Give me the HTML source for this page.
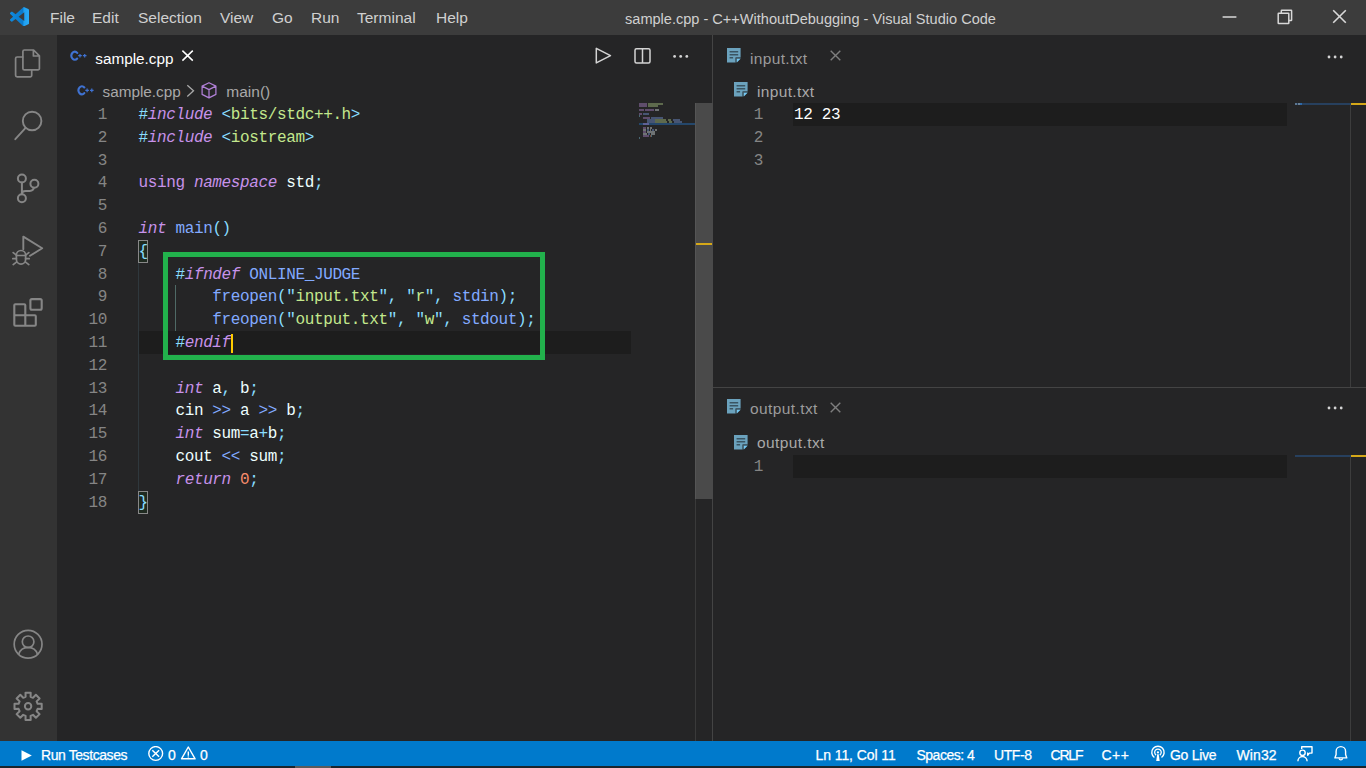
<!DOCTYPE html>
<html>
<head>
<meta charset="utf-8">
<title>sample.cpp - C++WithoutDebugging - Visual Studio Code</title>
<style>
*{box-sizing:border-box;margin:0;padding:0}
html,body{width:1366px;height:768px;overflow:hidden;background:#252526;font-family:"Liberation Sans",sans-serif;color:#ccc}
.abs{position:absolute}
#titlebar{position:absolute;left:0;top:0;width:1366px;height:35px;background:#3c3c3c}
.menu{position:absolute;top:0;height:35px;line-height:35px;font-size:15.5px;color:#d0d0d0;white-space:nowrap}
#title{position:absolute;top:0;height:35px;line-height:38px;left:605.5px;width:410px;text-align:center;font-size:14.55px;color:#d0d0d0;white-space:nowrap}
#activity{position:absolute;left:0;top:35px;width:57px;height:706px;background:#333333}
#editor1{position:absolute;left:57px;top:35px;width:655px;height:706px;background:#252526}
#vsplit{position:absolute;left:712px;top:35px;width:1px;height:706px;background:#444444}
#editor2{position:absolute;left:713px;top:35px;width:653px;height:352px;background:#252526}
#hsplit{position:absolute;left:713px;top:387px;width:653px;height:1px;background:#444444}
#editor3{position:absolute;left:713px;top:388px;width:653px;height:353px;background:#252526}
#status{position:absolute;left:0;top:741px;width:1366px;height:25px;background:#007acc}
#bottom{position:absolute;left:0;top:766px;width:1366px;height:2px;background:#1b252c}
.st{position:absolute;top:741px;height:25px;line-height:29px;-webkit-text-stroke:0.25px #fff;font-size:14.6px;color:#fff;white-space:nowrap}
.code{position:absolute;font-family:"Liberation Mono",monospace;font-size:16px;letter-spacing:-0.37px;white-space:pre;height:23px;line-height:23px;color:#eeffff}
.ln{position:absolute;font-family:"Liberation Mono",monospace;font-size:16px;letter-spacing:-0.37px;white-space:pre;height:23px;line-height:23px;color:#858585;text-align:right;width:40px}
.k{color:#c792ea}
.ki{color:#c792ea;font-style:italic}
.p{color:#89ddff}
.s{color:#c3e88d}
.f{color:#82aaff}
.n{color:#f78c6c}
.tab{position:absolute;font-size:16.2px;white-space:nowrap;height:24px;line-height:24px}
.bc{position:absolute;font-size:15.6px;white-space:nowrap;height:24px;line-height:24px;color:#a9a9a9}
</style>
</head>
<body>
<div id="titlebar"></div>
<div id="activity"></div>
<div id="editor1"></div>
<div id="vsplit"></div>
<div id="editor2"></div>
<div id="hsplit"></div>
<div id="editor3"></div>
<div id="status"></div>
<div id="bottom"></div>

<!-- MENU -->
<div class="menu" style="left:50px">File</div>
<div class="menu" style="left:92px">Edit</div>
<div class="menu" style="left:138px">Selection</div>
<div class="menu" style="left:220px">View</div>
<div class="menu" style="left:272px">Go</div>
<div class="menu" style="left:311px">Run</div>
<div class="menu" style="left:357px">Terminal</div>
<div class="menu" style="left:436px">Help</div>
<div id="title">sample.cpp - C++WithoutDebugging - Visual Studio Code</div>


<!-- VS CODE LOGO -->
<svg class="abs" style="left:10px;top:7px" width="19" height="19.300" viewBox="0 0 24 24" preserveAspectRatio="none"><defs><linearGradient id="lg" x1="0" x2="1" y1="0" y2="0"><stop offset="0" stop-color="#0f8ade"/><stop offset="0.68" stop-color="#0a7acc"/><stop offset="0.73" stop-color="#1f9ff0"/><stop offset="1" stop-color="#29acf6"/></linearGradient></defs><path fill="url(#lg)" d="M23.15 2.587L18.21.21a1.494 1.494 0 0 0-1.705.29l-9.46 8.63-4.12-3.128a.999.999 0 0 0-1.276.057L.327 7.261A1 1 0 0 0 .326 8.74L3.899 12 .326 15.26a1 1 0 0 0 .001 1.479L1.65 17.94a.999.999 0 0 0 1.276.057l4.12-3.128 9.46 8.63a1.492 1.492 0 0 0 1.704.29l4.942-2.377A1.5 1.5 0 0 0 24 20.06V3.939a1.5 1.5 0 0 0-.85-1.352zm-5.146 14.861L10.826 12l7.178-5.448v10.896z"/></svg>

<!-- WINDOW CONTROLS -->
<svg class="abs" style="left:1215px;top:0" width="151" height="35" viewBox="0 0 151 35" fill="none" stroke="#d8d8d8" stroke-width="1.5">
<path d="M7.6 17h13.8"/>
<rect x="63.200" y="13.200" width="10.600" height="10.300" rx="0.500"/><path d="M66.300 13.200v-2.500a0.500 0.500 0 0 1 0.500-0.500h9.300a0.500 0.500 0 0 1 0.500 0.500v9.300a0.500 0.500 0 0 1-0.500 0.500H73.800"/>
<path d="M118.200 10.200l12.600 12.600M130.800 10.200l-12.600 12.600" stroke-width="1.600"/>
</svg>

<!-- ACTIVITY BAR ICONS -->
<svg class="abs" style="left:0;top:35px" width="57" height="310" viewBox="0 35 57 310" fill="none" stroke="#868686" stroke-width="1.7" stroke-linejoin="round" stroke-linecap="round">
<!-- files -->
<path d="M22.900 56.500V51.500a1.500 1.500 0 0 1 1.500-1.500h9.200l5.800 5.800v12.600a1.500 1.500 0 0 1-1.500 1.500H24.400a1.500 1.500 0 0 1-1.500-1.500V56.500zM33.400 50.200v5.800h5.800"/>
<path d="M22.700 57H17.100a1.500 1.500 0 0 0-1.500 1.500v16.800a1.500 1.500 0 0 0 1.500 1.500h13.100a1.500 1.500 0 0 0 1.500-1.500V70.200"/>
<!-- search -->
<circle cx="32.100" cy="121" r="9.300" stroke-width="1.900"/><path d="M25.600 127.900L15.300 139.200" stroke-width="1.900"/>
<!-- scm -->
<g stroke-width="2"><circle cx="21.900" cy="178.500" r="4"/><circle cx="34.400" cy="183.700" r="4"/><circle cx="21.900" cy="198.300" r="4"/>
<path d="M21.900 182.500V194.300M33.900 187.700c-.400 2.300-1.600 3.200-4 3.200h-4.300c-2.200 0-3.700 1.200-3.700 3.300"/></g>
<!-- debug -->
<path d="M23.300 249.200V236.600L42.200 248.300 30 255.800" stroke-width="1.900"/>
<rect x="16.400" y="250.500" width="9.200" height="13.600" rx="4.600"/><path d="M16.400 255.500h9.200M13.200 252.600l3.200 2.500M28.800 252.600l-3.200 2.500M12.800 258.700h3.600M25.600 258.700h3.600M13.200 264.600l3.200-2.500M28.800 264.600l-3.200-2.500"/>
<!-- extensions -->
<path d="M15.300 304.300h9a1 1 0 0 1 1 1v9.900h9.500a1 1 0 0 1 1 1v8.600a1 1 0 0 1-1 1h-19.500a1 1 0 0 1-1-1v-19.500a1 1 0 0 1 1-1zM14.300 315.200h11M25.300 315.200v10.600" stroke-width="2.100"/>
<rect x="30.400" y="299.100" width="11.300" height="10.700" rx="1.500" stroke-width="2.100"/>
</svg>
<svg class="abs" style="left:0;top:625px" width="57" height="100" viewBox="0 625 57 100" fill="none" stroke="#868686" stroke-width="1.7" stroke-linejoin="round">
<circle cx="28.100" cy="644.300" r="13.900"/><circle cx="28.100" cy="641.800" r="5.800"/><path d="M18.600 654.400c1.500-4.600 5-7 9.500-7s8 2.400 9.500 7"/>
<circle cx="28.100" cy="706.300" r="3.200" stroke-width="2"/>
<path stroke-width="2" d="M25.6 696.8L25.5 692.7L30.7 692.7L30.6 696.8L33.0 697.8L35.9 694.8L39.6 698.5L36.6 701.4L37.6 703.8L41.7 703.7L41.7 708.9L37.6 708.8L36.6 711.2L39.6 714.1L35.9 717.8L33.0 714.8L30.6 715.8L30.7 719.9L25.5 719.9L25.6 715.8L23.2 714.8L20.3 717.8L16.6 714.1L19.6 711.2L18.6 708.8L14.5 708.9L14.5 703.7L18.6 703.8L19.6 701.4L16.6 698.5L20.3 694.8L23.2 697.8z"/>
</svg>

<!-- TAB 1 -->
<svg class="abs" style="left:69px;top:49px" width="20" height="14" viewBox="69 49 20 14" fill="none" stroke="#3f72d2"><path d="M77.200 52.900a3.300 4.100 0 1 0 0 5.600" stroke-width="2.100" stroke-linecap="round"/><path d="M80 53.900v3.600M78.200 55.700h3.600M84.700 53.900v3.600M82.900 55.700h3.600" stroke-width="1.200"/></svg>
<div class="tab" style="left:95.300px;top:46.500px;color:#fff;font-size:15.300px">sample.cpp</div>
<svg class="abs" style="left:181px;top:49px" width="14" height="14" viewBox="181 49 14 14" fill="none" stroke="#fff" stroke-width="1.500"><path d="M182.400 50.600l10.400 10M192.800 50.600l-10.400 10"/></svg>
<!-- editor actions -->
<svg class="abs" style="left:590px;top:44px" width="104" height="24" viewBox="590 44 104 24" fill="none" stroke="#d4d4d4" stroke-width="1.500" stroke-linejoin="round"><path d="M596.300 48.300v14.600l14.200-7.300z"/><rect x="635" y="48.700" width="15" height="14.200" rx="1.500"/><path d="M642.500 48.700v14.200"/><g fill="#d4d4d4" stroke="none"><circle cx="674.600" cy="56.400" r="1.400"/><circle cx="680.700" cy="56.400" r="1.400"/><circle cx="686.800" cy="56.400" r="1.400"/></g></svg>

<!-- BREADCRUMB 1 -->
<svg class="abs" style="left:76px;top:83px" width="20" height="14" viewBox="76 83 20 14" fill="none" stroke="#3f72d2"><path d="M84.300 87.500a3.300 4.100 0 1 0 0 5.600" stroke-width="2.100" stroke-linecap="round"/><path d="M87.100 88.600v3.600M85.300 90.400h3.600M91.800 88.600v3.600M90 90.400h3.600" stroke-width="1.200"/></svg>
<div class="bc" style="left:102.500px;top:79.500px;font-size:15.300px">sample.cpp</div>
<svg class="abs" style="left:185px;top:84px" width="11" height="14" viewBox="185 84 11 14" fill="none" stroke="#a9a9a9" stroke-width="1.300"><path d="M187.300 85.200l6.200 5.600-6.200 5.600"/></svg>
<svg class="abs" style="left:200px;top:81px" width="18" height="19" viewBox="200 81 18 19" fill="none" stroke="#b180d7" stroke-width="1.250" stroke-linejoin="round"><path d="M209 82.700l6.900 3.400v8.300l-6.900 3.500-6.900-3.500v-8.300zM202.100 86.100l6.900 3.500 6.900-3.500M209 89.600v8.300"/></svg>
<div class="bc" style="left:226.300px;top:79.500px;font-size:15.500px">main()</div>
<!-- ENDCHROME -->

<!-- CODE -->
<div class="abs" style="left:139px;top:331px;width:492px;height:23px;background:#1d1d1d"></div>
<div class="abs" style="left:138px;top:263px;width:1px;height:228px;background:#2f383d"></div>
<div class="abs" style="left:175px;top:285px;width:1px;height:46px;background:#4f6a66"></div>
<div class="abs" style="left:138px;top:240px;width:10px;height:23px;border:1px solid #888;background:#1f2a20"></div>
<div class="abs" style="left:138px;top:491px;width:10px;height:23px;border:1px solid #888;background:#1f2a20"></div>
<div class="ln" style="left:67px;top:104px">1</div>
<div class="code" style="left:138.500px;top:104px"><span class="p">#</span><span class="ki">include</span> <span class="p">&lt;</span><span class="s">bits/stdc++.h</span><span class="p">&gt;</span></div>
<div class="ln" style="left:67px;top:127px">2</div>
<div class="code" style="left:138.500px;top:127px"><span class="p">#</span><span class="ki">include</span> <span class="p">&lt;</span><span class="s">iostream</span><span class="p">&gt;</span></div>
<div class="ln" style="left:67px;top:150px">3</div>
<div class="ln" style="left:67px;top:172px">4</div>
<div class="code" style="left:138.500px;top:172px"><span class="k">using</span> <span class="ki">namespace</span> std<span class="p">;</span></div>
<div class="ln" style="left:67px;top:195px">5</div>
<div class="ln" style="left:67px;top:218px">6</div>
<div class="code" style="left:138.500px;top:218px"><span class="ki">int</span> <span class="f">main</span><span class="p">()</span></div>
<div class="ln" style="left:67px;top:241px">7</div>
<div class="code" style="left:138.500px;top:241px"><span class="p">{</span></div>
<div class="ln" style="left:67px;top:264px">8</div>
<div class="code" style="left:138.500px;top:264px">    <span class="p">#</span><span class="ki">ifndef</span> <span class="f">ONLINE_JUDGE</span></div>
<div class="ln" style="left:67px;top:286px">9</div>
<div class="code" style="left:138.500px;top:286px">        <span class="f">freopen</span><span class="p">("</span><span class="s">input.txt</span><span class="p">",</span> <span class="p">"</span><span class="s">r</span><span class="p">",</span> <span class="f">stdin</span><span class="p">);</span></div>
<div class="ln" style="left:67px;top:309px">10</div>
<div class="code" style="left:138.500px;top:309px">        <span class="f">freopen</span><span class="p">("</span><span class="s">output.txt</span><span class="p">",</span> <span class="p">"</span><span class="s">w</span><span class="p">",</span> <span class="f">stdout</span><span class="p">);</span></div>
<div class="ln" style="left:67px;top:332px">11</div>
<div class="code" style="left:138.500px;top:332px">    <span class="p">#</span><span class="ki">endif</span></div>
<div class="ln" style="left:67px;top:355px">12</div>
<div class="ln" style="left:67px;top:378px">13</div>
<div class="code" style="left:138.500px;top:378px">    <span class="ki">int</span> a<span class="p">,</span> b<span class="p">;</span></div>
<div class="ln" style="left:67px;top:400px">14</div>
<div class="code" style="left:138.500px;top:400px">    cin <span class="f">&gt;&gt;</span> a <span class="f">&gt;&gt;</span> b<span class="p">;</span></div>
<div class="ln" style="left:67px;top:423px">15</div>
<div class="code" style="left:138.500px;top:423px">    <span class="ki">int</span> sum<span class="p">=</span>a<span class="p">+</span>b<span class="p">;</span></div>
<div class="ln" style="left:67px;top:446px">16</div>
<div class="code" style="left:138.500px;top:446px">    cout <span class="f">&lt;&lt;</span> sum<span class="p">;</span></div>
<div class="ln" style="left:67px;top:469px">17</div>
<div class="code" style="left:138.500px;top:469px">    <span class="ki">return</span> <span class="n">0</span><span class="p">;</span></div>
<div class="ln" style="left:67px;top:492px">18</div>
<div class="code" style="left:138.500px;top:492px"><span class="p">}</span></div>
<div class="abs" style="left:231px;top:334px;width:2px;height:19px;background:#ffcc00"></div>
<div class="abs" style="left:163px;top:252px;width:382px;height:108px;border:5px solid #22b14c"></div>
<div class="abs" style="left:639px;top:123px;width:56px;height:2px;background:#24476b"></div>
<div class="abs" style="left:639px;top:103px;width:8px;height:2px;background:#b78ad6;opacity:.4"></div>
<div class="abs" style="left:648px;top:103px;width:15px;height:2px;background:#b5d38a;opacity:.4"></div>
<div class="abs" style="left:639px;top:105px;width:8px;height:2px;background:#b78ad6;opacity:.4"></div>
<div class="abs" style="left:648px;top:105px;width:10px;height:2px;background:#b5d38a;opacity:.4"></div>
<div class="abs" style="left:639px;top:109px;width:5px;height:2px;background:#b78ad6;opacity:.4"></div>
<div class="abs" style="left:645px;top:109px;width:9px;height:2px;background:#b78ad6;opacity:.4"></div>
<div class="abs" style="left:655px;top:109px;width:4px;height:2px;background:#dfe8ea;opacity:.4"></div>
<div class="abs" style="left:639px;top:113px;width:3px;height:2px;background:#b78ad6;opacity:.4"></div>
<div class="abs" style="left:643px;top:113px;width:6px;height:2px;background:#7a9de8;opacity:.4"></div>
<div class="abs" style="left:639px;top:115px;width:1px;height:2px;background:#7fcbe8;opacity:.4"></div>
<div class="abs" style="left:643px;top:117px;width:7px;height:2px;background:#b78ad6;opacity:.4"></div>
<div class="abs" style="left:651px;top:117px;width:12px;height:2px;background:#7a9de8;opacity:.4"></div>
<div class="abs" style="left:647px;top:119px;width:8px;height:2px;background:#7a9de8;opacity:.4"></div>
<div class="abs" style="left:655px;top:119px;width:11px;height:2px;background:#b5d38a;opacity:.4"></div>
<div class="abs" style="left:668px;top:119px;width:3px;height:2px;background:#b5d38a;opacity:.4"></div>
<div class="abs" style="left:673px;top:119px;width:7px;height:2px;background:#7a9de8;opacity:.4"></div>
<div class="abs" style="left:647px;top:121px;width:8px;height:2px;background:#7a9de8;opacity:.4"></div>
<div class="abs" style="left:655px;top:121px;width:12px;height:2px;background:#b5d38a;opacity:.4"></div>
<div class="abs" style="left:669px;top:121px;width:3px;height:2px;background:#b5d38a;opacity:.4"></div>
<div class="abs" style="left:674px;top:121px;width:8px;height:2px;background:#7a9de8;opacity:.4"></div>
<div class="abs" style="left:643px;top:123px;width:6px;height:2px;background:#b78ad6;opacity:.4"></div>
<div class="abs" style="left:643px;top:127px;width:3px;height:2px;background:#b78ad6;opacity:.4"></div>
<div class="abs" style="left:647px;top:127px;width:2px;height:2px;background:#dfe8ea;opacity:.4"></div>
<div class="abs" style="left:650px;top:127px;width:2px;height:2px;background:#dfe8ea;opacity:.4"></div>
<div class="abs" style="left:643px;top:129px;width:3px;height:2px;background:#dfe8ea;opacity:.4"></div>
<div class="abs" style="left:647px;top:129px;width:2px;height:2px;background:#7a9de8;opacity:.4"></div>
<div class="abs" style="left:650px;top:129px;width:1px;height:2px;background:#dfe8ea;opacity:.4"></div>
<div class="abs" style="left:652px;top:129px;width:2px;height:2px;background:#7a9de8;opacity:.4"></div>
<div class="abs" style="left:655px;top:129px;width:2px;height:2px;background:#dfe8ea;opacity:.4"></div>
<div class="abs" style="left:643px;top:131px;width:3px;height:2px;background:#b78ad6;opacity:.4"></div>
<div class="abs" style="left:647px;top:131px;width:8px;height:2px;background:#dfe8ea;opacity:.4"></div>
<div class="abs" style="left:643px;top:133px;width:4px;height:2px;background:#dfe8ea;opacity:.4"></div>
<div class="abs" style="left:648px;top:133px;width:2px;height:2px;background:#7a9de8;opacity:.4"></div>
<div class="abs" style="left:651px;top:133px;width:4px;height:2px;background:#dfe8ea;opacity:.4"></div>
<div class="abs" style="left:643px;top:135px;width:6px;height:2px;background:#b78ad6;opacity:.4"></div>
<div class="abs" style="left:650px;top:135px;width:1px;height:2px;background:#e88a6a;opacity:.4"></div>
<div class="abs" style="left:651px;top:135px;width:1px;height:2px;background:#7fcbe8;opacity:.4"></div>
<div class="abs" style="left:639px;top:137px;width:1px;height:2px;background:#7fcbe8;opacity:.4"></div>
<div class="abs" style="left:695px;top:103px;width:1px;height:638px;background:#3a3a3a"></div>
<div class="abs" style="left:695px;top:103px;width:18px;height:396px;background:#4a4a4a;border-left:1px solid #555"></div>
<div class="abs" style="left:696px;top:243px;width:16px;height:2px;background:#d5a818"></div>
<!-- ENDCODE -->
<!-- RIGHT -->
<svg class="abs" style="left:727px;top:48.4px" width="14" height="15" viewBox="0 0 14 15"><path fill="#6ba2bd" d="M0 0h13.600v9.600h-5v5H0z"/><path fill="#3a5462" d="M2.600 2.900h8.600v1.600H2.600zM2.600 5.900h8.600v1.600H2.600zM2.600 9h3.500v1.600H2.600z"/><path fill="#3f5560" d="M8.600 9.600h5v0.800l-4.200 4.200h-0.800z"/><path fill="#74c8f2" d="M13.600 10.800v0l-3.800 3.800v-3.800z" /></svg>
<div class="tab" style="left:750px;top:46.500px;color:#9b9b9b;font-size:15.500px;letter-spacing:.35px">input.txt</div>
<svg class="abs" style="left:830px;top:50px" width="12" height="12" viewBox="0 0 12 12" fill="none" stroke="#7e7e7e" stroke-width="1.400"><path d="M0.700 0.700l9.600 9.600M10.300 0.700L0.700 10.300"/></svg>
<svg class="abs" style="left:1327px;top:55.2px" width="18" height="4" viewBox="0 0 18 4" fill="#d4d4d4"><circle cx="2" cy="2" r="1.400"/><circle cx="8.100" cy="2" r="1.400"/><circle cx="14.200" cy="2" r="1.400"/></svg>
<svg class="abs" style="left:734px;top:82.4px" width="14" height="15" viewBox="0 0 14 15"><path fill="#6ba2bd" d="M0 0h13.600v9.600h-5v5H0z"/><path fill="#3a5462" d="M2.600 2.900h8.600v1.600H2.600zM2.600 5.900h8.600v1.600H2.600zM2.600 9h3.500v1.600H2.600z"/><path fill="#3f5560" d="M8.600 9.600h5v0.800l-4.200 4.200h-0.800z"/><path fill="#74c8f2" d="M13.600 10.800v0l-3.800 3.800v-3.800z" /></svg>
<div class="bc" style="left:757px;top:79.500px;font-size:15.500px;letter-spacing:.35px">input.txt</div>
<div class="abs" style="left:793px;top:103px;width:494px;height:23px;background:#1d1d1d"></div>
<div class="ln" style="left:723px;top:104px">1</div>
<div class="ln" style="left:723px;top:127px">2</div>
<div class="ln" style="left:723px;top:150px">3</div>
<div class="code" style="left:794px;top:104px;color:#fff">12 23</div>
<div class="abs" style="left:1295px;top:103px;width:56px;height:2px;background:#27405e"></div>
<div class="abs" style="left:1295px;top:103px;width:2px;height:2px;background:#5c7690"></div>
<div class="abs" style="left:1298px;top:103px;width:2px;height:2px;background:#6b8197"></div>
<div class="abs" style="left:1300px;top:103px;width:2px;height:2px;background:#2f69a8"></div>
<div class="abs" style="left:1350px;top:105px;width:1px;height:282px;background:#3d3d3d"></div>
<div class="abs" style="left:1351px;top:103px;width:15px;height:2px;background:#d5a818"></div>
<svg class="abs" style="left:727px;top:399.2px" width="14" height="15" viewBox="0 0 14 15"><path fill="#6ba2bd" d="M0 0h13.600v9.600h-5v5H0z"/><path fill="#3a5462" d="M2.600 2.900h8.600v1.600H2.600zM2.600 5.900h8.600v1.600H2.600zM2.600 9h3.500v1.600H2.600z"/><path fill="#3f5560" d="M8.600 9.600h5v0.800l-4.200 4.200h-0.800z"/><path fill="#74c8f2" d="M13.600 10.800v0l-3.800 3.800v-3.800z" /></svg>
<div class="tab" style="left:750px;top:396.500px;color:#9b9b9b;font-size:15.500px;letter-spacing:.4px">output.txt</div>
<svg class="abs" style="left:830px;top:401.5px" width="12" height="12" viewBox="0 0 12 12" fill="none" stroke="#7e7e7e" stroke-width="1.400"><path d="M0.700 0.700l9.600 9.600M10.300 0.700L0.700 10.300"/></svg>
<svg class="abs" style="left:1327px;top:406.2px" width="18" height="4" viewBox="0 0 18 4" fill="#d4d4d4"><circle cx="2" cy="2" r="1.400"/><circle cx="8.100" cy="2" r="1.400"/><circle cx="14.200" cy="2" r="1.400"/></svg>
<svg class="abs" style="left:734px;top:435.2px" width="14" height="15" viewBox="0 0 14 15"><path fill="#6ba2bd" d="M0 0h13.600v9.600h-5v5H0z"/><path fill="#3a5462" d="M2.600 2.900h8.600v1.600H2.600zM2.600 5.900h8.600v1.600H2.600zM2.600 9h3.500v1.600H2.600z"/><path fill="#3f5560" d="M8.600 9.600h5v0.800l-4.200 4.200h-0.800z"/><path fill="#74c8f2" d="M13.600 10.800v0l-3.800 3.800v-3.800z" /></svg>
<div class="bc" style="left:757px;top:430.800px;font-size:15.500px;letter-spacing:.4px">output.txt</div>
<div class="abs" style="left:793px;top:455px;width:494px;height:23px;background:#1d1d1d"></div>
<div class="ln" style="left:723px;top:456px">1</div>
<div class="abs" style="left:1295px;top:455px;width:56px;height:2px;background:#27405e"></div>
<div class="abs" style="left:1350px;top:457px;width:1px;height:284px;background:#3d3d3d"></div>
<div class="abs" style="left:1351px;top:455px;width:15px;height:2px;background:#d5a818"></div>
<!-- ENDRIGHT -->
<!-- STATUS -->
<div class="abs" style="left:295px;top:766px;width:36px;height:2px;background:#5b5b5b"></div>
<svg class="abs" style="left:21px;top:750px" width="12" height="12" viewBox="0 0 12 12"><path fill="#fff" d="M0.500 0.300l10.300 5.200L0.500 10.800z"/></svg>
<div class="st" style="left:41px;font-size:14px;letter-spacing:-0.42px;">Run Testcases</div>
<svg class="abs" style="left:148px;top:746px" width="16" height="16" viewBox="0 0 16 16" fill="none" stroke="#fff" stroke-width="1.400"><circle cx="7.700" cy="7.500" r="6.900"/><path d="M4.300 4.200l6.800 6.600M11.100 4.200l-6.800 6.600" stroke-width="1.500"/></svg>
<div class="st" style="left:168px;font-size:14px;letter-spacing:0px;">0</div>
<svg class="abs" style="left:180px;top:745px" width="17" height="16" viewBox="0 0 17 16" fill="none" stroke="#fff" stroke-width="1.400" stroke-linejoin="round"><path d="M8.300 2l6.800 11.800H1.500z"/><path d="M8.300 6.500v4.200M8.300 11.600v0.900" stroke-width="1.400"/></svg>
<div class="st" style="left:200px;font-size:14px;letter-spacing:0px;">0</div>
<div class="st" style="left:815.5px;font-size:14px;letter-spacing:-0.08px;">Ln 11, Col 11</div>
<div class="st" style="left:916.5px;font-size:14px;letter-spacing:-0.5px;">Spaces: 4</div>
<div class="st" style="left:994px;font-size:14px;letter-spacing:-0.4px;">UTF-8</div>
<div class="st" style="left:1050.5px;font-size:14px;letter-spacing:-1.2px;">CRLF</div>
<div class="st" style="left:1101.5px;font-size:14px;letter-spacing:0.5px;">C++</div>
<svg class="abs" style="left:1150px;top:745px" width="16" height="17" viewBox="0 0 16 17" fill="none" stroke="#fff" stroke-width="1.400"><path d="M4.400 12.500A6.200 6.200 0 1 1 11.500 12.500"/><path d="M6.100 10.100A3.300 3.300 0 1 1 9.800 10.100" stroke-width="1.300"/><circle cx="7.950" cy="7.400" r="1.100" fill="#fff" stroke="none"/><path d="M7.200 9.200h1.500l1 6.900H6.200z" fill="#fff" stroke="none"/></svg>
<div class="st" style="left:1170px;font-size:14px;letter-spacing:-0.3px;">Go Live</div>
<div class="st" style="left:1236.5px;font-size:14px;letter-spacing:0.1px;">Win32</div>
<svg class="abs" style="left:1295px;top:744px" width="20" height="19" viewBox="1295 744 20 19" fill="none" stroke="#fff" stroke-width="1.400" stroke-linejoin="round"><path d="M1301.700 749V746.700H1312V753.100H1309.400L1307.700 755.200V753.100H1307"/><circle cx="1302.500" cy="752.800" r="2.700"/><path d="M1297.900 761.200a4.600 4.700 0 0 1 9.200 0"/></svg>
<svg class="abs" style="left:1332px;top:744px" width="18" height="19" viewBox="1332 744 18 19" fill="none" stroke="#fff" stroke-width="1.400" stroke-linejoin="round"><path d="M1334.900 757.900L1336.100 754.500V751.400A4.750 4.750 0 0 1 1345.600 751.400V754.500L1346.800 757.900z"/><path d="M1339 758.400a1.900 1.900 0 0 0 3.700 0" stroke-width="1.300"/></svg>
<!-- ENDSTATUS -->
</body>
</html>
